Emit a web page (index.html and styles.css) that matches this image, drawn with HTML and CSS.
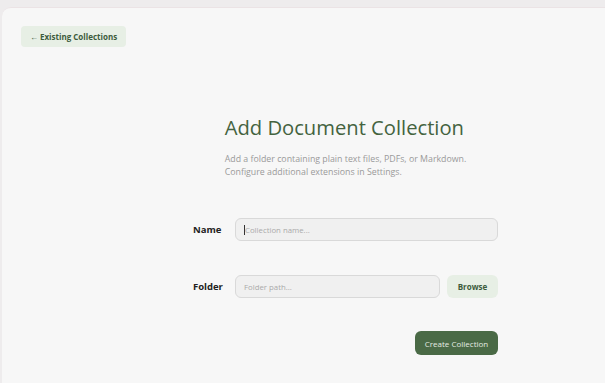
FILE: index.html
```html
<!DOCTYPE html>
<html lang="en">
  <head>
    <meta charset="UTF-8" />
    <title>Add Document Collection</title>
    <link rel="stylesheet" href="styles.css">
  </head>
  <body>
    <div class="panel">
      <button class="back">&larr; Existing Collections</button>
      <div class="form">
        <div class="head">
          <h1>Add Document Collection</h1>
          <p>Add a folder containing plain text files, PDFs, or Markdown.<br />Configure additional extensions in Settings.</p>
        </div>
        <div class="row row-name">
          <label>Name</label>
          <div class="field"><span class="caret"></span>Collection name...</div>
        </div>
        <div class="row">
          <label>Folder</label>
          <div class="field">Folder path...</div>
          <button class="browse">Browse</button>
        </div>
        <div class="actions">
          <button class="create">Create Collection</button>
        </div>
      </div>
    </div>
  </body>
</html>
```

FILE: styles.css
```css
body {
  margin: 0;
  background: #eeeced;
  font-family: "Open Sans", "Noto Sans", sans-serif;
  height: 383px;
  overflow: hidden;
}
.panel {
  margin: 7px 0 0 2px;
  height: 376px;
  box-sizing: border-box;
  background: #f7f7f7;
  border-top: 1px solid #ebe3e5;
  border-radius: 9px 0 0 0;
  padding: 18px 19px;
}
button {
  font-family: inherit;
  border: none;
  cursor: pointer;
}
.back {
  display: block;
  width: 105px;
  height: 21px;
  padding: 0;
  border-radius: 4px;
  background: #e7efe5;
  color: #3d5c3c;
  font-size: 8px;
  font-weight: 700;
}
.form {
  width: 305px;
  margin: 66px 0 0 172px;
}
.head {
  width: fit-content;
  margin: 0 auto;
  white-space: nowrap;
}
h1 {
  margin: 0;
  font-size: 20.2px;
  font-weight: 400;
  color: #44633f;
  line-height: 28px;
}
p {
  margin: 12px 0 0;
  font-size: 8.8px;
  line-height: 13px;
  color: #9a9a9a;
}
.row {
  display: flex;
  align-items: center;
  gap: 7px;
  margin-top: 34px;
}
.row-name {
  margin-top: 39px;
}
label {
  width: 35px;
  font-size: 9.5px;
  font-weight: 700;
  color: #222;
}
.field {
  flex: 1;
  height: 23px;
  box-sizing: border-box;
  display: flex;
  align-items: center;
  padding-left: 8px;
  background: #f0f0f0;
  border: 1px solid #d9d9d9;
  border-radius: 6px;
  font-size: 7.8px;
  color: #aaa;
}
.caret {
  width: 1px;
  height: 10px;
  background: #333;
}
.browse {
  width: 51px;
  height: 23px;
  border-radius: 6px;
  background: #e7efe5;
  color: #3d5c3c;
  font-size: 8px;
  font-weight: 700;
}
.actions {
  display: flex;
  justify-content: flex-end;
  margin-top: 33px;
}
.create {
  width: 83px;
  height: 24px;
  border-radius: 6px;
  background: #4a6a46;
  color: #e4ebe2;
  font-size: 8px;
}
```
